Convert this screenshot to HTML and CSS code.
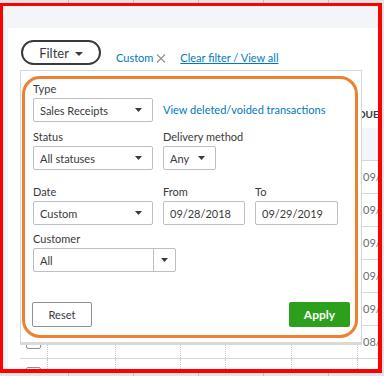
FILE: index.html
```html
<!DOCTYPE html>
<html>
<head>
<meta charset="utf-8">
<link rel="stylesheet" href="styles.css">
</head>
<body>
<div class="frame">
  <div class="topbar"></div>
  <div class="main">
    <div class="gutter"></div>
    <div class="content">
      <div class="filterbar">
        <button class="filter-btn"><span>Filter</span><svg class="caret-lg" width="8" height="4" viewBox="0 0 8 4"><polygon points="0,0 8,0 4,4" fill="#393a3d"/></svg></button>
        <span class="chip">Custom<svg class="x" width="10" height="9" viewBox="0 0 10 9"><path d="M1 0.5 L9 8.5 M9 0.5 L1 8.5" stroke="#8d9096" stroke-width="1.1" fill="none"/></svg></span>
        <a class="clear">Clear filter / View all</a>
      </div>

      <div class="table">
        <div class="thead"><div class="th-spacer"></div><div class="th">DUE DATE</div></div>
        <div class="band"></div>
        <div class="row"><div class="c c1"><span class="cb"></span></div><div class="c"></div><div class="c"></div><div class="c"></div><div class="c"></div><div class="c"></div><div class="c date">09/29/2019</div></div>
        <div class="row"><div class="c c1"><span class="cb"></span></div><div class="c"></div><div class="c"></div><div class="c"></div><div class="c"></div><div class="c"></div><div class="c date">09/28/2019</div></div>
        <div class="row"><div class="c c1"><span class="cb"></span></div><div class="c"></div><div class="c"></div><div class="c"></div><div class="c"></div><div class="c"></div><div class="c date">09/27/2019</div></div>
        <div class="row"><div class="c c1"><span class="cb"></span></div><div class="c"></div><div class="c"></div><div class="c"></div><div class="c"></div><div class="c"></div><div class="c date">09/20/2019</div></div>
        <div class="row"><div class="c c1"><span class="cb"></span></div><div class="c"></div><div class="c"></div><div class="c"></div><div class="c"></div><div class="c"></div><div class="c date">09/12/2019</div></div>
        <div class="row"><div class="c c1"><span class="cb"></span></div><div class="c"></div><div class="c"></div><div class="c"></div><div class="c"></div><div class="c"></div><div class="c date">08/30/2019</div></div>
        <div class="row"><div class="c c1"><span class="cb"></span></div><div class="c"></div><div class="c"></div><div class="c"></div><div class="c"></div><div class="c"></div><div class="c date">08/21/2019</div></div>
      </div>

      <div class="panel">
        <div class="hl">
          <div class="frow r1">
            <div class="field">
              <span class="lbl">Type</span>
              <div class="ctl w120"><span>Sales Receipts</span><svg width="7" height="4" viewBox="0 0 7 4"><polygon points="0,0 7,0 3.5,4" fill="#393a3d"/></svg></div>
            </div>
            <a class="link">View deleted/voided transactions</a>
          </div>
          <div class="frow r2">
            <div class="field">
              <span class="lbl">Status</span>
              <div class="ctl w120"><span>All statuses</span><svg width="7" height="4" viewBox="0 0 7 4"><polygon points="0,0 7,0 3.5,4" fill="#393a3d"/></svg></div>
            </div>
            <div class="field">
              <span class="lbl">Delivery method</span>
              <div class="ctl w53"><span>Any</span><svg width="7" height="4" viewBox="0 0 7 4"><polygon points="0,0 7,0 3.5,4" fill="#393a3d"/></svg></div>
            </div>
          </div>
          <div class="frow r3">
            <div class="field">
              <span class="lbl">Date</span>
              <div class="ctl w120"><span>Custom</span><svg width="7" height="4" viewBox="0 0 7 4"><polygon points="0,0 7,0 3.5,4" fill="#393a3d"/></svg></div>
            </div>
            <div class="field">
              <span class="lbl">From</span>
              <div class="ctl w82"><span>09/28/2018</span></div>
            </div>
            <div class="field">
              <span class="lbl">To</span>
              <div class="ctl w83"><span>09/29/2019</span></div>
            </div>
          </div>
          <div class="frow r4">
            <div class="field">
              <span class="lbl">Customer</span>
              <div class="ctl combo"><span class="combo-text">All</span><span class="combo-btn"><svg width="7" height="4" viewBox="0 0 7 4"><polygon points="0,0 7,0 3.5,4" fill="#393a3d"/></svg></span></div>
            </div>
          </div>
          <div class="frow r5">
            <button class="btn reset">Reset</button>
            <button class="btn apply">Apply</button>
          </div>
        </div>
      </div>
    </div>
  </div>
</div>
</body>
</html>
```

FILE: styles.css
```css
* { box-sizing: border-box; margin: 0; padding: 0; }
html, body { width: 384px; height: 376px; overflow: hidden; }
body {
  font-family: Lato, "Open Sans", sans-serif;
  color: #393a3d;
  background-color: #e4e4e4;
  background-image: repeating-linear-gradient(to right, transparent 0 64px, #c2c2c2 64px 65px);
  background-position: 4px 0;
  padding-top: 3px;
}
.frame {
  width: 382px;
  height: 370px;
  border-style: solid;
  border-color: #ff0000;
  border-width: 3px 4px 4px 3px;
  background: #f4f5f8;
  display: flex;
  flex-direction: column;
}
.topbar { height: 22px; flex: none; }
.main { flex: 1; display: flex; min-height: 0; }
.gutter { width: 5px; flex: none; }
.content { flex: 1; background: #fff; position: relative; overflow: hidden; }

/* filter bar */
.filterbar { display: flex; align-items: flex-end; padding: 12px 0 0 13px; height: 37px; }
.filter-btn {
  width: 80px; height: 25px;
  border: 2px solid #393a3d; border-radius: 13px;
  background: #fff; color: #393a3d;
  font-family: Lato, sans-serif; font-size: 13px;
  display: flex; align-items: center; justify-content: center; gap: 6px;
}
.caret-lg { margin-top: 2px; }
.chip { margin-left: 15px; font-size: 11px; line-height: 14px; color: #0077c5; display: flex; align-items: center; }
.chip .x { margin-left: 3px; margin-top: 1px; }
.clear { margin-left: 14px; font-size: 11px; line-height: 14px; color: #0077c5; text-decoration: underline; }

/* background table */
.table { margin: 35px 0 0 12px; }
.thead { height: 28px; display: flex; align-items: center; }
.th-spacer { width: 337px; flex: none; }
.th { font-size: 10px; font-weight: 700; white-space: nowrap; padding-left: 1px; }
.band { height: 33px; background: #f4f5f8; border-bottom: 1px solid #d4d7dc; }
.row {
  display: grid;
  grid-template-columns: 27px 68px 65px 45px 66px 66px 1fr;
  height: 33px;
  border-bottom: 1px solid #d4d7dc;
}
.c { border-left: 1px dotted #c4c4c4; }
.c1 { border-left: none; display: flex; justify-content: center; padding-top: 8px; }
.cb { width: 15px; height: 15px; border: 1px solid #8d9096; border-radius: 2px; background: #fff; }
.date { font-size: 11px; line-height: 32px; color: #6b6c72; padding-left: 5px; white-space: nowrap; overflow: hidden; }

/* dropdown panel */
.panel {
  position: absolute; left: 12px; top: 42px; width: 342px;
  background: #fff;
  border: 1px solid #d4d7dc; border-bottom: 3px solid #dadada;
  padding: 5px 3px 4px 1px;
}
.hl {
  height: 262px;
  border: 3px solid #ef7f31; border-radius: 18px;
  padding: 3px 5px 8px 8px;
}
.frow { display: flex; gap: 10px; align-items: flex-end; }
.r2 { margin-top: 8px; }
.r3 { margin-top: 15px; }
.r4 { margin-top: 7px; }
.r5 { margin-top: 30px; justify-content: space-between; align-items: stretch; }
.field { display: flex; flex-direction: column; }
.lbl { font-size: 11px; line-height: 14px; margin-bottom: 2px; color: #393a3d; white-space: nowrap; }
.ctl {
  height: 24px;
  border: 1px solid #babec5; border-radius: 2px;
  display: flex; align-items: center; justify-content: space-between;
  padding: 0 10px 0 6px;
  font-size: 11px; color: #393a3d; white-space: nowrap;
}
.w120 { width: 120px; }
.w53 { width: 53px; }
.w82 { width: 82px; }
.w83 { width: 83px; }
.combo { width: 143px; padding: 0; align-items: stretch; }
.combo-text { flex: 1; display: flex; align-items: center; padding-left: 6px; }
.combo-btn { width: 22px; flex: none; border-left: 1px solid #babec5; display: flex; align-items: center; justify-content: center; }
.link { font-size: 11px; line-height: 24px; color: #0077c5; white-space: nowrap; }
.btn { height: 25px; border-radius: 2px; font-family: Lato, sans-serif; }
.reset { width: 60px; margin-left: -1px; border: 1px solid #8d9096; background: #fff; color: #393a3d; font-size: 11px; }
.apply { width: 61px; border: none; background: #2ca01c; color: #fff; font-size: 12px; font-weight: 700; }
```
